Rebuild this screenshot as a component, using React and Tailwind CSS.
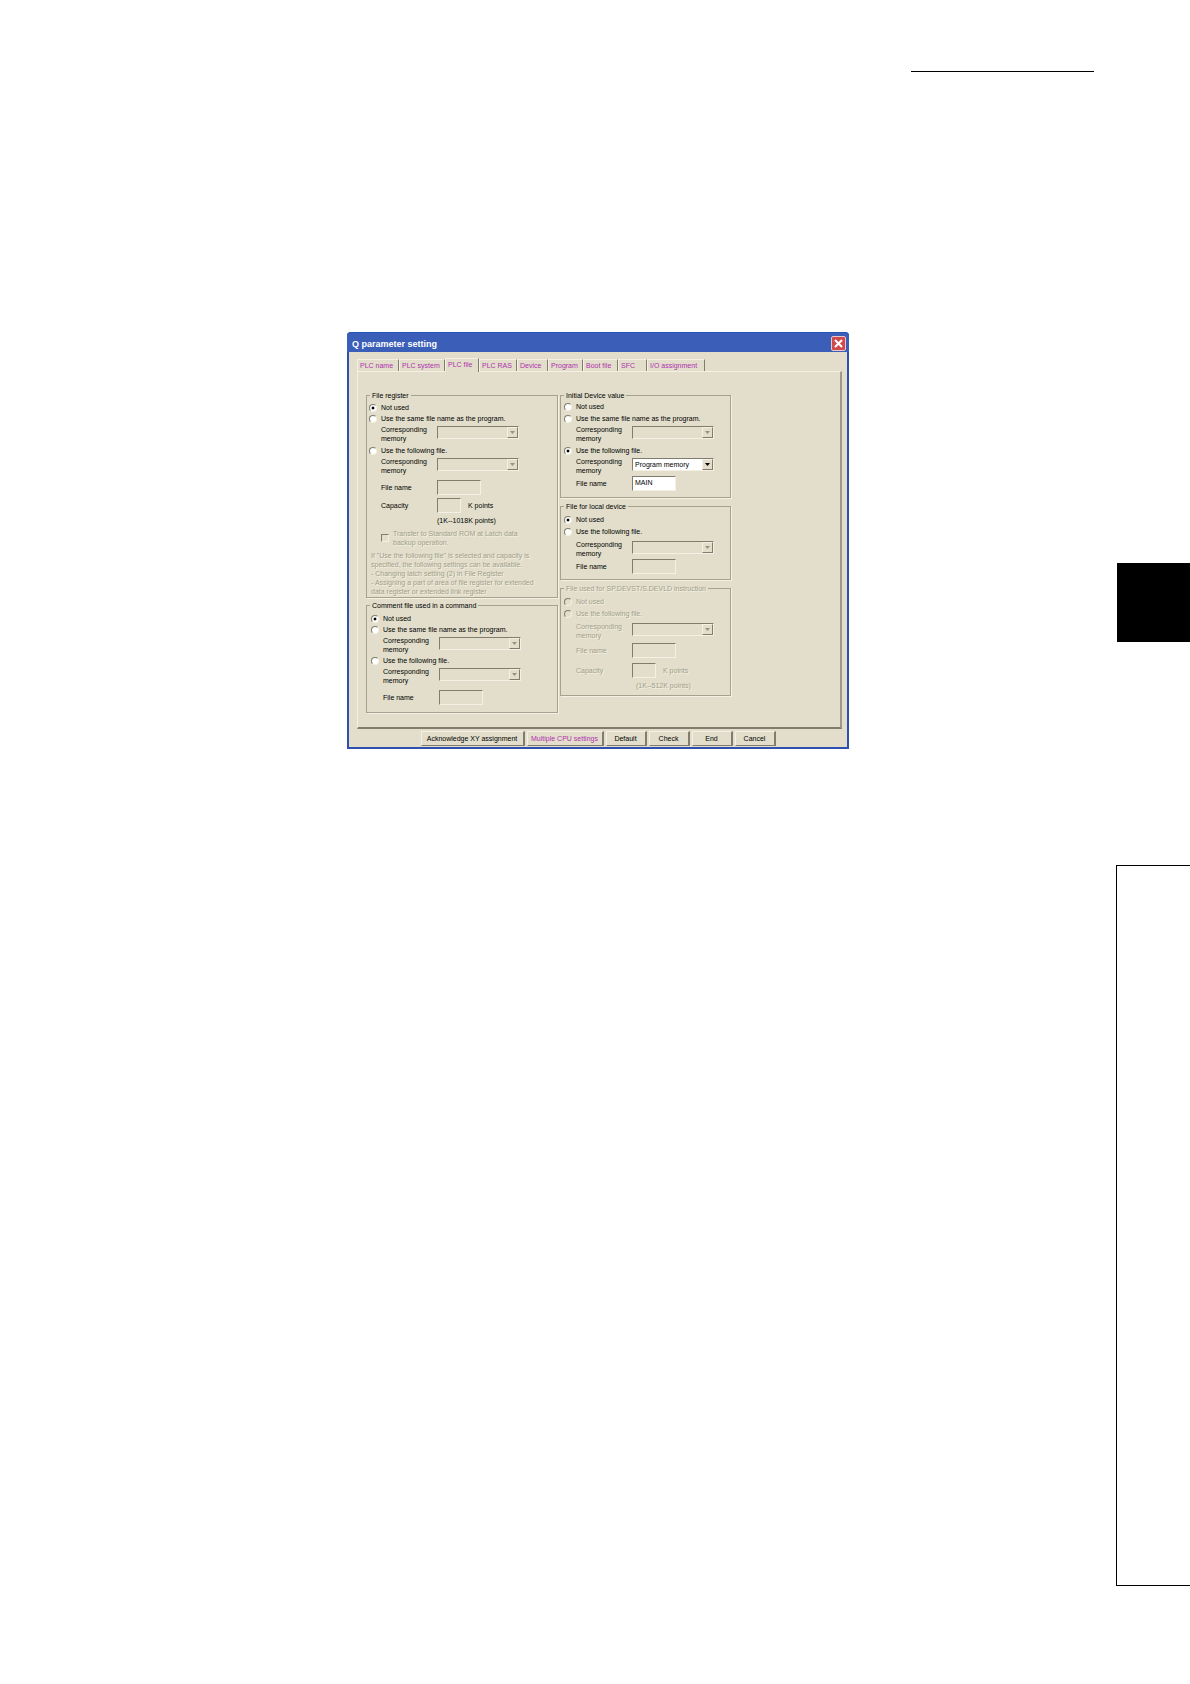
import React, { useState } from "react";

const TABS = [
  { name: "PLC name", width: "w-[42px]" },
  { name: "PLC system", width: "w-[46px]" },
  { name: "PLC file", width: "w-[34px]" },
  { name: "PLC RAS", width: "w-[38px]" },
  { name: "Device", width: "w-[31px]" },
  { name: "Program", width: "w-[35px]" },
  { name: "Boot file", width: "w-[35px]" },
  { name: "SFC", width: "w-[29px]" },
  { name: "I/O assignment", width: "w-[58px]" },
];

const BUTTONS = [
  { name: "Acknowledge XY assignment", width: "w-[104px]" },
  { name: "Multiple CPU settings", width: "w-[77px]", color: "text-[#b030b0]" },
  { name: "Default", width: "w-[41px]" },
  { name: "Check", width: "w-[41px]" },
  { name: "End", width: "w-[41px]" },
  { name: "Cancel", width: "w-[41px]" },
];

const Group = ({ title, disabled, className, children }) => (
  <fieldset
    disabled={disabled}
    className={`border border-[#a5a28f] shadow-[1px_1px_0_#f4f1e4] ${
      disabled ? "text-[#a19e89] [text-shadow:1px_1px_0_#f4f1e4]" : ""
    }`}
  >
    <legend className="ml-[3px] h-[9px] px-[2px] leading-[9px]">{title}</legend>
    <div className={`flex flex-col ${className}`}>{children}</div>
  </fieldset>
);

const Radio = ({ name, label, value, onChange, className = "" }) => (
  <label className={`flex h-[11px] items-center gap-1 ${className}`}>
    <input
      type="radio"
      name={name}
      checked={value === label}
      onChange={() => onChange(label)}
      className="size-2 appearance-none rounded-full border border-t-[#807d6e] border-r-[#f4f1e4] border-b-[#f4f1e4] border-l-[#807d6e] bg-white checked:bg-[radial-gradient(circle,#000_30%,#fff_40%)] disabled:bg-[#e2decb]"
    />
    {label}
  </label>
);

const Memory = ({ id, value = "", disabled = true, className = "" }) => (
  <div className={`flex h-[18px] items-start pl-3 ${className}`}>
    <label htmlFor={id} className="w-[56px]">
      Corresponding
      <br />
      memory
    </label>
    <div className="relative mt-px">
      <select
        id={id}
        defaultValue={value}
        disabled={disabled}
        className="block h-[13px] w-[82px] appearance-none border border-t-[#807d6e] border-r-[#f4f1e4] border-b-[#f4f1e4] border-l-[#807d6e] bg-white pl-[2px] leading-[11px] text-black opacity-100 disabled:bg-[#e2decb]"
      >
        <option>{value}</option>
      </select>
      <span className="pointer-events-none absolute top-px right-px flex h-[11px] w-[11px] items-center justify-center border border-t-[#f4f1e4] border-r-[#807d6e] border-b-[#807d6e] border-l-[#f4f1e4] bg-[#e2decb]">
        <svg viewBox="0 0 5 3" className={`h-[3px] w-[5px] ${disabled ? "fill-[#96937f]" : "fill-black"}`}>
          <path d="M0 0h5L2.5 3z" />
        </svg>
      </span>
    </div>
  </div>
);

const TextField = ({ id, label, value = "", disabled = true, width = "w-[44px]", unit, className = "" }) => (
  <div className={`flex h-[15px] items-center pl-3 ${className}`}>
    <label htmlFor={id} className="w-[56px]">
      {label}
    </label>
    <input
      id={id}
      type="text"
      defaultValue={value}
      disabled={disabled}
      className={`h-[15px] border border-t-[#807d6e] border-r-[#f4f1e4] border-b-[#f4f1e4] border-l-[#807d6e] bg-white px-[2px] pb-[2px] text-black disabled:bg-[#e2decb] ${width}`}
    />
    {unit && <span className="ml-[7px]">{unit}</span>}
  </div>
);

const NOT_USED = "Not used";
const SAME = "Use the same file name as the program.";
const FOLLOWING = "Use the following file.";

const PlcFile = () => {
  const [register, setRegister] = useState(NOT_USED);
  const [comment, setComment] = useState(NOT_USED);
  const [initial, setInitial] = useState(FOLLOWING);
  const [local, setLocal] = useState(NOT_USED);

  return (
    <div className="flex gap-[2px] pt-[19px] pb-[14px] pl-2">
      <div className="flex w-[192px] flex-col gap-[3px]">
        <Group title="File register" className="pt-[2px] pb-px pl-[2px]">
          <Radio name="register" label={NOT_USED} value={register} onChange={setRegister} />
          <Radio name="register" label={SAME} value={register} onChange={setRegister} />
          <Memory id="register-same" className="mt-px" />
          <Radio name="register" label={FOLLOWING} value={register} onChange={setRegister} className="mt-[2px]" />
          <Memory id="register-memory" className="mt-px" />
          <TextField id="register-file" label="File name" className="mt-[5px]" />
          <TextField id="register-capacity" label="Capacity" width="w-[24px]" unit="K points" className="mt-[3px]" />
          <p className="mt-[3px] pl-[68px]">(1K--1018K points)</p>
          <label className="mt-1 flex items-center gap-1 pl-3 text-[#a19e89] [text-shadow:1px_1px_0_#f4f1e4]">
            <input
              type="checkbox"
              disabled
              className="size-2 appearance-none border border-t-[#807d6e] border-r-[#f4f1e4] border-b-[#f4f1e4] border-l-[#807d6e]"
            />
            <span>
              Transfer to Standard ROM at Latch data
              <br />
              backup operation.
            </span>
          </label>
          <p className="mt-1 pl-[2px] whitespace-nowrap text-[#a19e89] [text-shadow:1px_1px_0_#f4f1e4]">
            If "Use the following file" is selected and capacity is
            <br />
            specified, the following settings can be available.
            <br />
            - Changing latch setting (2) in File Register
            <br />
            - Assigning a part of area of file register for extended
            <br />
            data register or extended link register
          </p>
        </Group>

        <Group title="Comment file used in a command" className="pt-[3px] pb-[7px] pl-1">
          <Radio name="comment" label={NOT_USED} value={comment} onChange={setComment} />
          <Radio name="comment" label={SAME} value={comment} onChange={setComment} />
          <Memory id="comment-same" className="mt-px" />
          <Radio name="comment" label={FOLLOWING} value={comment} onChange={setComment} className="mt-px" />
          <Memory id="comment-memory" className="mt-px" />
          <TextField id="comment-file" label="File name" className="mt-[5px]" />
        </Group>
      </div>

      <div className="flex w-[171px] flex-col gap-1">
        <Group title="Initial Device value" className="pt-px pb-[6px] pl-[3px]">
          <Radio name="initial" label={NOT_USED} value={initial} onChange={setInitial} />
          <Radio name="initial" label={SAME} value={initial} onChange={setInitial} className="mt-px" />
          <Memory id="initial-same" className="mt-px" />
          <Radio name="initial" label={FOLLOWING} value={initial} onChange={setInitial} className="mt-[2px]" />
          <Memory id="initial-memory" value="Program memory" disabled={false} className="mt-px" />
          <TextField id="initial-file" label="File name" value="MAIN" disabled={false} className="mt-px" />
        </Group>

        <Group title="File for local device" className="pt-[3px] pb-[5px] pl-[3px]">
          <Radio name="local" label={NOT_USED} value={local} onChange={setLocal} />
          <Radio name="local" label={FOLLOWING} value={local} onChange={setLocal} className="mt-px" />
          <Memory id="local-memory" className="mt-[3px]" />
          <TextField id="local-file" label="File name" className="mt-px" />
        </Group>

        <Group title="File used for SP.DEVST/S.DEVLD instruction" disabled className="pt-[3px] pb-[5px] pl-[3px]">
          <Radio name="devst" label={NOT_USED} />
          <Radio name="devst" label={FOLLOWING} className="mt-px" />
          <Memory id="devst-memory" className="mt-[3px]" />
          <TextField id="devst-file" label="File name" className="mt-[3px]" />
          <TextField id="devst-capacity" label="Capacity" width="w-[24px]" unit="K points" className="mt-[5px]" />
          <p className="mt-[3px] pl-[72px]">(1K--512K points)</p>
        </Group>
      </div>
    </div>
  );
};

const ParameterDialog = () => {
  const [tab, setTab] = useState("PLC file");

  return (
    <section className="w-[502px] rounded-t-[4px] border-x-2 border-b-2 border-[#2f50ae] bg-[#e2decb] font-['Liberation_Sans',sans-serif] text-[7px] leading-[9px] text-black">
      <header className="-mx-[2px] flex h-5 items-center justify-between rounded-t-[4px] border-t border-[#2a55b4] bg-[#3b5eb8] pt-[2px] pr-[3px] pl-[5px]">
        <h1 className="text-[9px] leading-[12px] font-bold text-white">Q parameter setting</h1>
        <button
          aria-label="Close"
          className="flex h-[15px] w-[15px] items-center justify-center rounded-[2px] border border-[#e8c8cc] bg-[#cf4a4c]"
        >
          <svg viewBox="0 0 9 9" className="size-[9px] stroke-white" strokeWidth="2">
            <path d="M1 1l7 7M8 1l-7 7" />
          </svg>
        </button>
      </header>

      <div className="pt-[6px] pr-[5px] pl-2">
        <nav className="flex items-end">
          {TABS.map((t) => (
            <button
              key={t.name}
              onClick={() => setTab(t.name)}
              className={`border-t border-r border-l border-t-[#f4f1e4] border-r-[#807d6e] border-l-[#f4f1e4] pl-[2px] text-left whitespace-nowrap text-[#b030b0] ${t.width} ${
                t.name === tab ? "relative -mb-px h-[14px] bg-[#e2decb] pb-[3px]" : "h-3 pb-px"
              }`}
            >
              {t.name}
            </button>
          ))}
        </nav>
        <div className="border-t border-r-2 border-b-2 border-l border-t-[#f4f1e4] border-r-[#9d9a87] border-b-[#807d6e] border-l-[#f4f1e4]">
          <PlcFile />
        </div>
      </div>

      <footer className="flex justify-center gap-[2px] pt-[2px] pb-px">
        {BUTTONS.map((b) => (
          <button
            key={b.name}
            className={`h-[15px] border-t border-r-2 border-b border-l border-t-[#f4f1e4] border-r-[#807d6e] border-b-[#807d6e] border-l-[#f4f1e4] whitespace-nowrap ${b.width} ${b.color || ""}`}
          >
            {b.name}
          </button>
        ))}
      </footer>
    </section>
  );
};

export default function App() {
  return (
    <div className="flex min-h-screen bg-white">
      <main className="flex-1">
        <div className="mt-[71px] mr-[22px] ml-auto h-px w-[183px] bg-black" />
        <div className="flex justify-center pt-[260px] pl-20">
          <ParameterDialog />
        </div>
      </main>
      <aside className="w-[74px]">
        <div className="mt-[563px] ml-px h-[79px] bg-black" />
        <div className="mt-[223px] h-[721px] border-y border-l border-black" />
      </aside>
    </div>
  );
}
